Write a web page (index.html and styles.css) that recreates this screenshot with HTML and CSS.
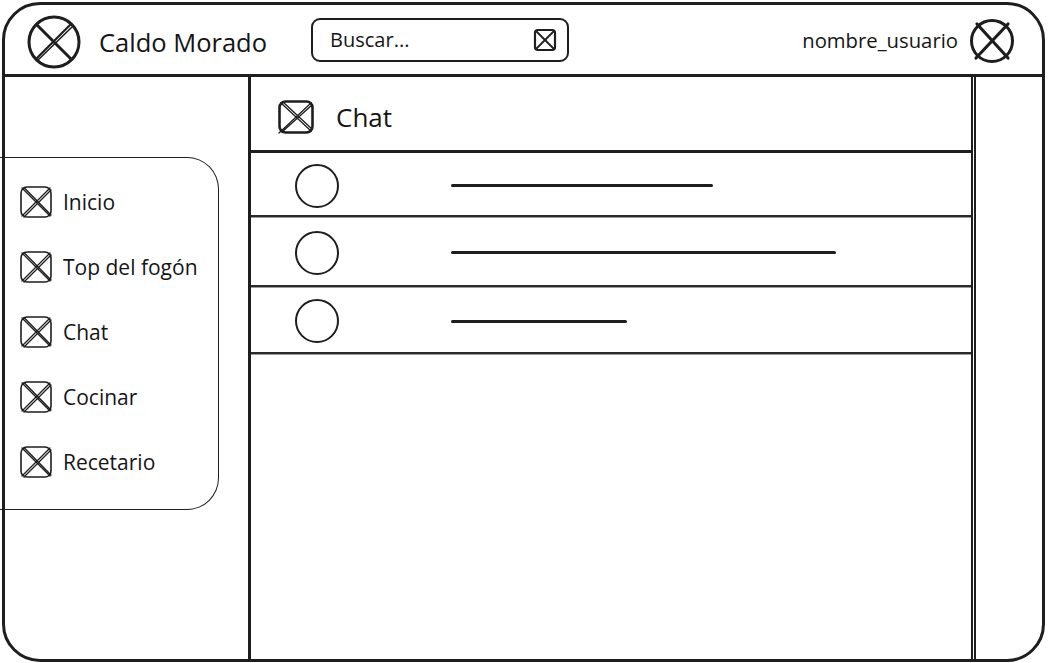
FILE: index.html
```html
<!DOCTYPE html>
<html lang="es">
<head>
<meta charset="utf-8">
<title>Caldo Morado</title>
<link rel="stylesheet" href="styles.css">
</head>
<body>
<div class="frame">
  <header class="topbar">
    <svg class="logo" width="56" height="56" viewBox="0 0 56 56" fill="none" stroke="#1e1e1e" stroke-linecap="round">
      <circle cx="28" cy="28" r="25" stroke-width="3"/>
      <path d="M11 11 L45 45" stroke-width="3"/>
      <path d="M44 11 L10 45" stroke-width="2.2"/>
      <path d="M46 13 L12 46" stroke-width="1.6"/>
    </svg>
    <span class="brand">Caldo Morado</span>
    <div class="search">
      <span class="search-text">Buscar...</span>
      <svg class="search-icon" width="24" height="24" viewBox="0 0 24 24" fill="none" stroke="#1e1e1e" stroke-linecap="round">
        <rect x="2" y="2" width="20" height="20" rx="3" stroke-width="2.2"/>
        <path d="M3 3 L21 21" stroke-width="1.8"/>
        <path d="M21 3 L3 21" stroke-width="1.8"/>
      </svg>
    </div>
    <span class="spacer"></span>
    <span class="username">nombre_usuario</span>
    <svg class="avatar" width="48" height="48" viewBox="0 0 48 48" fill="none" stroke="#1e1e1e" stroke-linecap="round">
      <circle cx="24" cy="24" r="20.5" stroke-width="3"/>
      <path d="M9 7 L40 41" stroke-width="3.2"/>
      <path d="M40 7 L8 41" stroke-width="3.2"/>
    </svg>
  </header>
  <div class="body">
    <aside class="sidebar">
      <nav class="nav">
        <div class="nav-item">
          <svg class="nav-icon" width="34" height="34" viewBox="0 0 34 34" fill="none" stroke="#1e1e1e" stroke-linecap="round"><rect x="2" y="2" width="30" height="30" rx="6" stroke-width="1.6"/><path d="M3 3 L31 31 M5 2.5 L32 30" stroke-width="1.3"/><path d="M31 3 L3 31 M32 5 L5 32" stroke-width="1.3"/></svg>
          <span>Inicio</span>
        </div>
        <div class="nav-item">
          <svg class="nav-icon" width="34" height="34" viewBox="0 0 34 34" fill="none" stroke="#1e1e1e" stroke-linecap="round"><rect x="2" y="2" width="30" height="30" rx="6" stroke-width="1.6"/><path d="M3 3 L31 31 M5 2.5 L32 30" stroke-width="1.3"/><path d="M31 3 L3 31 M32 5 L5 32" stroke-width="1.3"/></svg>
          <span>Top del fogón</span>
        </div>
        <div class="nav-item">
          <svg class="nav-icon" width="34" height="34" viewBox="0 0 34 34" fill="none" stroke="#1e1e1e" stroke-linecap="round"><rect x="2" y="2" width="30" height="30" rx="6" stroke-width="1.6"/><path d="M3 3 L31 31 M5 2.5 L32 30" stroke-width="1.3"/><path d="M31 3 L3 31 M32 5 L5 32" stroke-width="1.3"/></svg>
          <span>Chat</span>
        </div>
        <div class="nav-item">
          <svg class="nav-icon" width="34" height="34" viewBox="0 0 34 34" fill="none" stroke="#1e1e1e" stroke-linecap="round"><rect x="2" y="2" width="30" height="30" rx="6" stroke-width="1.6"/><path d="M3 3 L31 31 M5 2.5 L32 30" stroke-width="1.3"/><path d="M31 3 L3 31 M32 5 L5 32" stroke-width="1.3"/></svg>
          <span>Cocinar</span>
        </div>
        <div class="nav-item">
          <svg class="nav-icon" width="34" height="34" viewBox="0 0 34 34" fill="none" stroke="#1e1e1e" stroke-linecap="round"><rect x="2" y="2" width="30" height="30" rx="6" stroke-width="1.6"/><path d="M3 3 L31 31 M5 2.5 L32 30" stroke-width="1.3"/><path d="M31 3 L3 31 M32 5 L5 32" stroke-width="1.3"/></svg>
          <span>Recetario</span>
        </div>
      </nav>
    </aside>
    <main class="main">
      <div class="chat-head">
        <svg class="chat-icon" width="38" height="36" viewBox="0 0 38 36" fill="none" stroke="#1e1e1e" stroke-linecap="round"><rect x="2.5" y="2.5" width="33" height="31" rx="6" stroke-width="2.6"/><path d="M4 4 L34 32 M6 3 L35 30" stroke-width="1.3"/><path d="M34 4 L2 34 M35 6 L5 33" stroke-width="1.3"/></svg>
        <span class="chat-title">Chat</span>
      </div>
      <div class="chat-row">
        <span class="avatar-dot"></span>
        <span class="msg-line" style="width:262px"></span>
      </div>
      <div class="chat-row">
        <span class="avatar-dot"></span>
        <span class="msg-line" style="width:385px"></span>
      </div>
      <div class="chat-row">
        <span class="avatar-dot"></span>
        <span class="msg-line" style="width:176px"></span>
      </div>
    </main>
    <aside class="rightbar"></aside>
  </div>
</div>
</body>
</html>
```

FILE: styles.css
```css
* { box-sizing: border-box; }

html, body {
  margin: 0;
  padding: 0;
  background: #ffffff;
}

body {
  font-family: "Open Sans", "Noto Sans", sans-serif;
  font-weight: 500;
  color: #151515;
  width: 1048px;
  height: 663px;
  overflow: hidden;
}

.frame {
  margin: 2px 3px 0 2px;
  width: 1043px;
  height: 660px;
  border: 3px solid #1e1e1e;
  border-radius: 38px;
  display: flex;
  flex-direction: column;
}

.topbar {
  height: 72px;
  flex: none;
  display: flex;
  align-items: center;
  padding: 4px 26px 0 21px;
  border-bottom: 3px solid #1e1e1e;
}

.logo { flex: none; }

.brand {
  margin-left: 17px;
  font-size: 25.5px;
}

.search {
  flex: none;
  margin-left: 44px;
  width: 258px;
  height: 44px;
  margin-top: -4px;
  border: 2.5px solid #1e1e1e;
  border-radius: 9px;
  display: flex;
  align-items: center;
  justify-content: space-between;
  padding: 0 10px 0 17px;
}

.search-text { font-size: 20px; }

.spacer { flex: 1; }

.username {
  font-size: 20.3px;
  margin-right: 10px;
  margin-top: -4px;
}

.avatar { flex: none; margin-top: -2px; }

.body {
  flex: 1;
  display: flex;
  min-height: 0;
}

.sidebar {
  width: 246px;
  flex: none;
  border-right: 3px solid #1e1e1e;
  padding-top: 80px;
}

.nav {
  margin-left: -5px;
  width: 219px;
  height: 353px;
  border: 1.5px solid #1e1e1e;
  border-radius: 0 32px 32px 0;
  border-left: none;
  display: flex;
  flex-direction: column;
  gap: 31px;
  padding: 27px 0 0 19px;
}

.nav-item {
  height: 34px;
  display: flex;
  align-items: center;
  gap: 10px;
  font-size: 21px;
}

.nav-icon { flex: none; }

.main {
  flex: 1;
  display: flex;
  flex-direction: column;
}

.chat-head {
  height: 76px;
  flex: none;
  display: flex;
  align-items: center;
  padding: 6px 0 0 26px;
  border-bottom: 3px solid #1e1e1e;
}

.chat-title {
  margin-left: 21px;
  font-size: 26px;
}

.chat-row {
  height: 67px;
  flex: none;
  display: flex;
  align-items: center;
  padding: 3px 0 0 44px;
  border-bottom: 2px solid #2a2a2a;
  box-shadow: 0 1px 0 #9a9a9a;
}

.chat-row:nth-child(2) { height: 64px; }
.chat-row:nth-child(3) { height: 70px; }

.avatar-dot {
  width: 44px;
  height: 44px;
  border: 2.6px solid #1e1e1e;
  border-radius: 50%;
  flex: none;
}

.msg-line {
  margin-left: 112px;
  height: 3px;
  background: #1e1e1e;
  border-radius: 2px;
}

.rightbar {
  width: 71px;
  flex: none;
  border-left: 5px double #1e1e1e;
}
```
